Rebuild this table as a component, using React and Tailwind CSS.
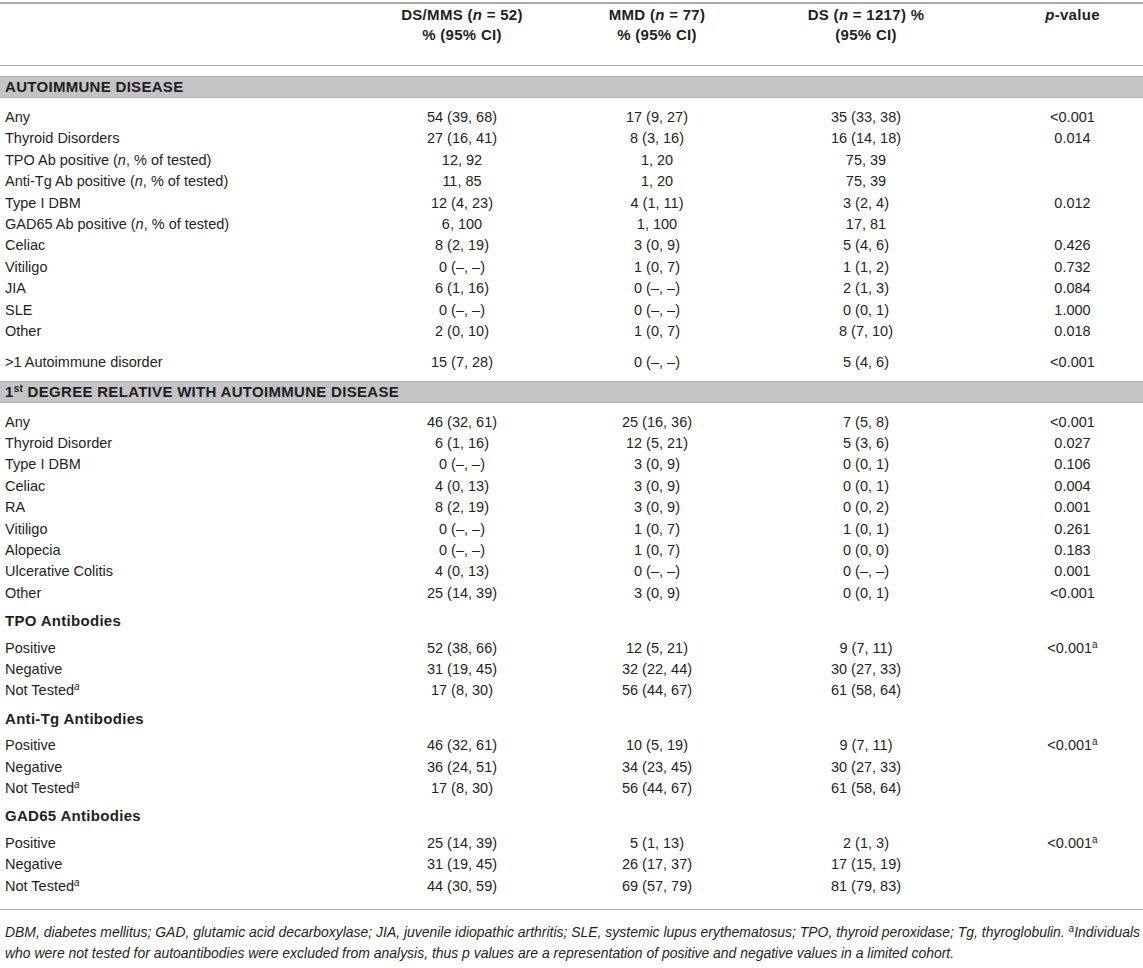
const GRID = "grid grid-cols-[370px_184px_206px_212px_1fr]";

const Sup = ({ children, italic }) => (
  <sup className={`text-[10px] ${italic ? "italic" : ""}`}>{children}</sup>
);

const autoimmune = [
  ["Any", "54 (39, 68)", "17 (9, 27)", "35 (33, 38)", "<0.001"],
  ["Thyroid Disorders", "27 (16, 41)", "8 (3, 16)", "16 (14, 18)", "0.014"],
  [<>TPO Ab positive (<i>n</i>, % of tested)</>, "12, 92", "1, 20", "75, 39", ""],
  [<>Anti-Tg Ab positive (<i>n</i>, % of tested)</>, "11, 85", "1, 20", "75, 39", ""],
  ["Type I DBM", "12 (4, 23)", "4 (1, 11)", "3 (2, 4)", "0.012"],
  [<>GAD65 Ab positive (<i>n</i>, % of tested)</>, "6, 100", "1, 100", "17, 81", ""],
  ["Celiac", "8 (2, 19)", "3 (0, 9)", "5 (4, 6)", "0.426"],
  ["Vitiligo", "0 (–, –)", "1 (0, 7)", "1 (1, 2)", "0.732"],
  ["JIA", "6 (1, 16)", "0 (–, –)", "2 (1, 3)", "0.084"],
  ["SLE", "0 (–, –)", "0 (–, –)", "0 (0, 1)", "1.000"],
  ["Other", "2 (0, 10)", "1 (0, 7)", "8 (7, 10)", "0.018"],
];

const relative = [
  ["Any", "46 (32, 61)", "25 (16, 36)", "7 (5, 8)", "<0.001"],
  ["Thyroid Disorder", "6 (1, 16)", "12 (5, 21)", "5 (3, 6)", "0.027"],
  ["Type I DBM", "0 (–, –)", "3 (0, 9)", "0 (0, 1)", "0.106"],
  ["Celiac", "4 (0, 13)", "3 (0, 9)", "0 (0, 1)", "0.004"],
  ["RA", "8 (2, 19)", "3 (0, 9)", "0 (0, 2)", "0.001"],
  ["Vitiligo", "0 (–, –)", "1 (0, 7)", "1 (0, 1)", "0.261"],
  ["Alopecia", "0 (–, –)", "1 (0, 7)", "0 (0, 0)", "0.183"],
  ["Ulcerative Colitis", "4 (0, 13)", "0 (–, –)", "0 (–, –)", "0.001"],
  ["Other", "25 (14, 39)", "3 (0, 9)", "0 (0, 1)", "<0.001"],
];

const notTested = <>Not Tested<Sup italic>a</Sup></>;
const pSig = <>&lt;0.001<Sup>a</Sup></>;

const antibodies = [
  {
    title: "TPO Antibodies",
    rows: [
      ["Positive", "52 (38, 66)", "12 (5, 21)", "9 (7, 11)", pSig],
      ["Negative", "31 (19, 45)", "32 (22, 44)", "30 (27, 33)", ""],
      [notTested, "17 (8, 30)", "56 (44, 67)", "61 (58, 64)", ""],
    ],
  },
  {
    title: "Anti-Tg Antibodies",
    rows: [
      ["Positive", "46 (32, 61)", "10 (5, 19)", "9 (7, 11)", pSig],
      ["Negative", "36 (24, 51)", "34 (23, 45)", "30 (27, 33)", ""],
      [notTested, "17 (8, 30)", "56 (44, 67)", "61 (58, 64)", ""],
    ],
  },
  {
    title: "GAD65 Antibodies",
    rows: [
      ["Positive", "25 (14, 39)", "5 (1, 13)", "2 (1, 3)", pSig],
      ["Negative", "31 (19, 45)", "26 (17, 37)", "17 (15, 19)", ""],
      [notTested, "44 (30, 59)", "69 (57, 79)", "81 (79, 83)", ""],
    ],
  },
];

const Row = ({ cells, className = "" }) => (
  <div className={`${GRID} h-[21.4px] leading-[21.4px] ${className}`}>
    <div className="pl-[5px] whitespace-nowrap">{cells[0]}</div>
    <div className="text-center">{cells[1]}</div>
    <div className="text-center">{cells[2]}</div>
    <div className="text-center">{cells[3]}</div>
    <div className="text-center pl-[30px]">{cells[4]}</div>
  </div>
);

const Band = ({ children, className = "" }) => (
  <div
    className={`bg-[#c3c4c6] border-y border-[#b3b4b6] h-[22px] leading-[20px] pl-[5px] font-bold text-[15px] tracking-[0.3px] ${className}`}
  >
    {children}
  </div>
);

export default function App() {
  return (
    <div
      className="w-[1143px] bg-white text-[#231f20] text-[14.5px] pt-[2px]"
      style={{ fontFamily: '"Liberation Sans", Arial, sans-serif' }}
    >
      {/* header */}
      <div
        className={`${GRID} border-t-2 border-b border-[#a7a9ac] pt-[1px] pb-[20px] font-bold text-[15px] tracking-[0.3px] leading-[20px]`}
      >
        <div />
        <div className="text-center">
          DS/MMS (<i>n</i> = 52)
          <br />% (95% CI)
        </div>
        <div className="text-center">
          MMD (<i>n</i> = 77)
          <br />% (95% CI)
        </div>
        <div className="text-center">
          DS (<i>n</i> = 1217) %
          <br />
          (95% CI)
        </div>
        <div className="text-center pl-[30px]">
          <i>p</i>-value
        </div>
      </div>

      <Band className="mt-[10px]">AUTOIMMUNE DISEASE</Band>
      <div className="pt-[9px]">
        {autoimmune.map((r, i) => (
          <Row key={i} cells={r} />
        ))}
        <Row className="mt-[10px]" cells={[">1 Autoimmune disorder", "15 (7, 28)", "0 (–, –)", "5 (4, 6)", "<0.001"]} />
      </div>

      <Band className="mt-[7px]">
        1<Sup>st</Sup> DEGREE RELATIVE WITH AUTOIMMUNE DISEASE
      </Band>
      <div className="pt-[9px]">
        {relative.map((r, i) => (
          <Row key={i} cells={r} />
        ))}
      </div>

      {antibodies.map((g) => (
        <div key={g.title}>
          <div className="h-[21.4px] leading-[21.4px] mt-[6px] mb-[6px] pl-[5px] font-bold text-[15px] tracking-[0.3px]">
            {g.title}
          </div>
          {g.rows.map((r, i) => (
            <Row key={i} cells={r} />
          ))}
        </div>
      ))}

      {/* footnote */}
      <div className="mt-[12px] border-t border-[#a7a9ac] pt-[12px] pb-[6px] pl-[5px] italic text-[13.95px] leading-[21px] whitespace-nowrap">
        DBM, diabetes mellitus; GAD, glutamic acid decarboxylase; JIA, juvenile idiopathic arthritis; SLE, systemic
        lupus erythematosus; TPO, thyroid peroxidase; Tg, thyroglobulin. <Sup italic>a</Sup>Individuals
        <br />
        who were not tested for autoantibodies were excluded from analysis, thus p values are a representation of
        positive and negative values in a limited cohort.
      </div>
    </div>
  );
}
